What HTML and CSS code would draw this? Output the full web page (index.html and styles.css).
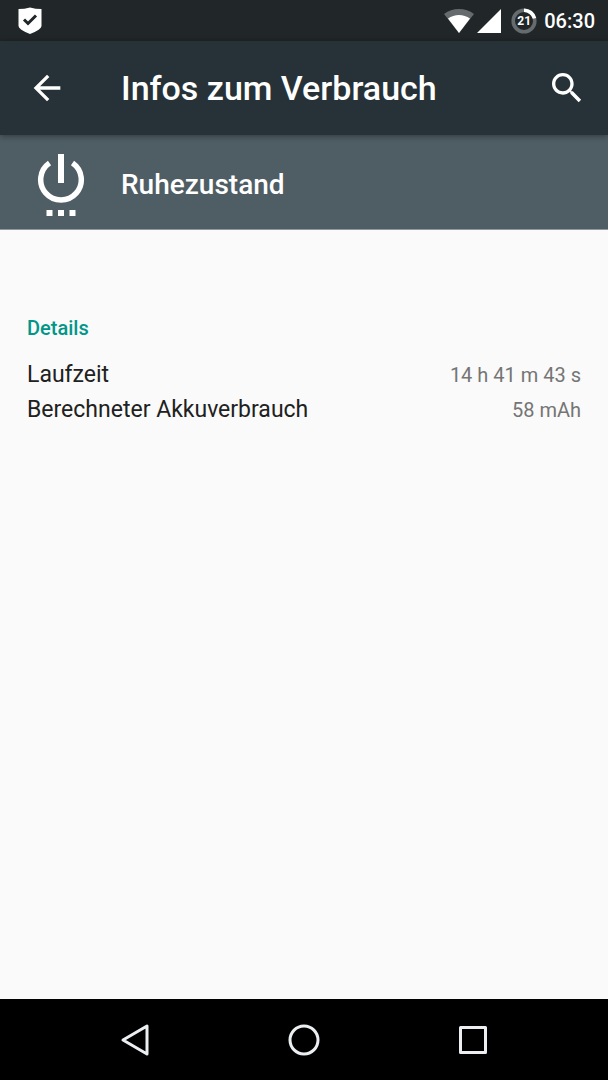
FILE: index.html
```html
<!DOCTYPE html>
<html lang="de">

<head>
    <meta charset="UTF-8">
    <meta name="viewport" content="width=device-width, initial-scale=1.0">
    <title>Infos zum Verbrauch</title>
    <link rel="stylesheet" href="styles.css">
</head>

<body>
    <div class="status-bar">
        <svg class="shield-icon" width="24" height="28" viewBox="0 0 24 28" aria-hidden="true">
            <path fill="#fff" d="M0.500 2Q6.500 2 12 0.500Q17.500 2 23.500 2V19Q23.500 22.500 12 27Q0.500 22.500 0.500 19Z" />
            <path fill="none" stroke="#212629" stroke-width="3" d="M6 12.500L10 16.500L18 8.500" />
        </svg>
        <div class="status-icons">
            <svg class="wifi-icon" width="30" height="24" viewBox="0 0 30 24" aria-hidden="true">
                <path fill="#666b6e" d="M0 5Q6.500 0 15 0T30 5L15 24Z" />
                <path fill="#fff" d="M4 9.500Q9 6 15 6T26 9.500L15 24Z" />
            </svg>
            <svg class="signal-icon" width="24" height="24" viewBox="0 0 24 24" aria-hidden="true">
                <path fill="#fff" d="M24 0V24H0Z" />
            </svg>
            <div class="battery">
                <svg width="26" height="26" viewBox="0 0 26 26" aria-hidden="true">
                    <circle cx="13" cy="13" r="10.800" fill="none" stroke="#666b6e" stroke-width="3.600" />
                    <path fill="none" stroke="#fff" stroke-width="3.600" d="M13 2.200A10.800 10.800 0 0 1 23.500 10.400" />
                </svg>
                <span class="battery-level">21</span>
            </div>
            <span class="clock">06:30</span>
        </div>
    </div>

    <header class="app-bar">
        <button class="icon-button" aria-label="Zurück">
            <svg width="40" height="40" viewBox="0 0 24 24">
                <path fill="#fff" d="M20 11H7.830l5.590-5.590L12 4l-8 8 8 8 1.410-1.410L7.830 13H20v-2z" />
            </svg>
        </button>
        <h1 class="title">Infos zum Verbrauch</h1>
        <button class="icon-button" aria-label="Suchen">
            <svg width="40" height="40" viewBox="0 0 24 24">
                <path fill="#fff" d="M15.500 14h-.790l-.280-.270C15.410 12.590 16 11.110 16 9.500 16 5.910 13.090 3 9.500 3S3 5.910 3 9.500 5.910 16 9.500 16c1.610 0 3.090-.590 4.230-1.570l.270.280v.790l5 4.990L20.490 19l-4.990-5zm-6 0C7.010 14 5 11.990 5 9.500S7.010 5 9.500 5 14 7.010 14 9.500 11.990 14 9.500 14z" />
            </svg>
        </button>
    </header>

    <div class="app-header">
        <svg class="power-icon" width="48" height="64" viewBox="0 0 48 64" aria-hidden="true">
            <path fill="none" stroke="#fff" stroke-width="5.500" d="M12.500 10A20.300 20.300 0 1 0 35.500 10" />
            <path fill="#fff" d="M21 1h6v29h-6zM9.500 57h6v6h-6zM21 57h6v6h-6zM32.500 57h6v6h-6z" />
        </svg>
        <h2 class="app-name">Ruhezustand</h2>
    </div>

    <main class="content">
        <h3 class="category">Details</h3>
        <dl class="details">
            <div class="detail-row">
                <dt>Laufzeit</dt>
                <dd>14 h 41 m 43 s</dd>
            </div>
            <div class="detail-row">
                <dt>Berechneter Akkuverbrauch</dt>
                <dd>58 mAh</dd>
            </div>
        </dl>
    </main>

    <nav class="nav-bar">
        <button class="nav-button" aria-label="Zurück">
            <svg width="34" height="34" viewBox="0 0 34 34">
                <path d="M29 3V31L5 17Z" />
            </svg>
        </button>
        <button class="nav-button" aria-label="Startseite">
            <svg width="34" height="34" viewBox="0 0 34 34">
                <circle cx="17" cy="17" r="14" />
            </svg>
        </button>
        <button class="nav-button" aria-label="Übersicht">
            <svg width="34" height="34" viewBox="0 0 34 34">
                <path d="M4.500 4.500H29.500V29.500H4.500Z" />
            </svg>
        </button>
    </nav>
</body>

</html>
```

FILE: styles.css
```css
* {
    box-sizing: border-box;
}

body {
    margin: 0;
    min-height: 100vh;
    display: flex;
    flex-direction: column;
    background-color: #fafafa;
    font-family: Roboto, "Liberation Sans", sans-serif;
}

button {
    padding: 0;
    border: none;
    background: transparent;
    cursor: pointer;
}

svg {
    display: block;
}

h1,
h2,
h3 {
    margin: 0;
    font-weight: 500;
}

.status-bar {
    height: 41px;
    display: flex;
    justify-content: space-between;
    align-items: center;
    padding: 0 13px 0 18px;
    background-color: #212629;
    color: white;
}

.status-icons {
    display: flex;
    align-items: center;
}

.signal-icon {
    margin-left: 3px;
}

.battery {
    position: relative;
    margin: 0 7px 0 10px;
}

.battery-level {
    position: absolute;
    inset: 0;
    text-align: center;
    font-size: 12px;
    line-height: 26px;
    font-weight: 700;
}

.clock {
    font-size: 20px;
    line-height: 24px;
    font-weight: 500;
}

.app-bar {
    position: relative;
    height: 94px;
    display: flex;
    align-items: center;
    padding: 0 21px 0 27px;
    background-color: #263238;
    color: white;
    box-shadow: 0 1px 6px rgba(0, 0, 0, 0.4);
}

.title {
    flex: 1;
    margin-left: 54px;
    font-size: 34px;
    line-height: 40px;
}

.app-header {
    height: 95px;
    display: flex;
    align-items: center;
    padding: 5px 27px 0 37px;
    background-color: #4f5d64;
    border-bottom: 1px solid #8f999d;
    color: white;
}

.app-name {
    margin-left: 36px;
    font-size: 28px;
    line-height: 34px;
}

.content {
    flex: 1;
    padding: 86px 27px 27px;
}

.category {
    color: #009688;
    font-size: 20px;
    line-height: 24px;
}

.details {
    display: flex;
    flex-direction: column;
    gap: 7px;
    margin: 21px 0 0;
}

.detail-row {
    display: flex;
    justify-content: space-between;
    align-items: baseline;
    line-height: 27px;
}

.detail-row dt {
    color: #212121;
    font-size: 23px;
}

.detail-row dd {
    margin: 0;
    color: #757575;
    font-size: 20px;
}

.nav-bar {
    height: 81px;
    display: flex;
    padding: 0 51px;
    background-color: black;
}

.nav-button {
    flex: 1;
    display: flex;
    justify-content: center;
    align-items: center;
}

.nav-button svg {
    fill: none;
    stroke: #eceff1;
    stroke-width: 3;
    stroke-linejoin: round;
}
```
